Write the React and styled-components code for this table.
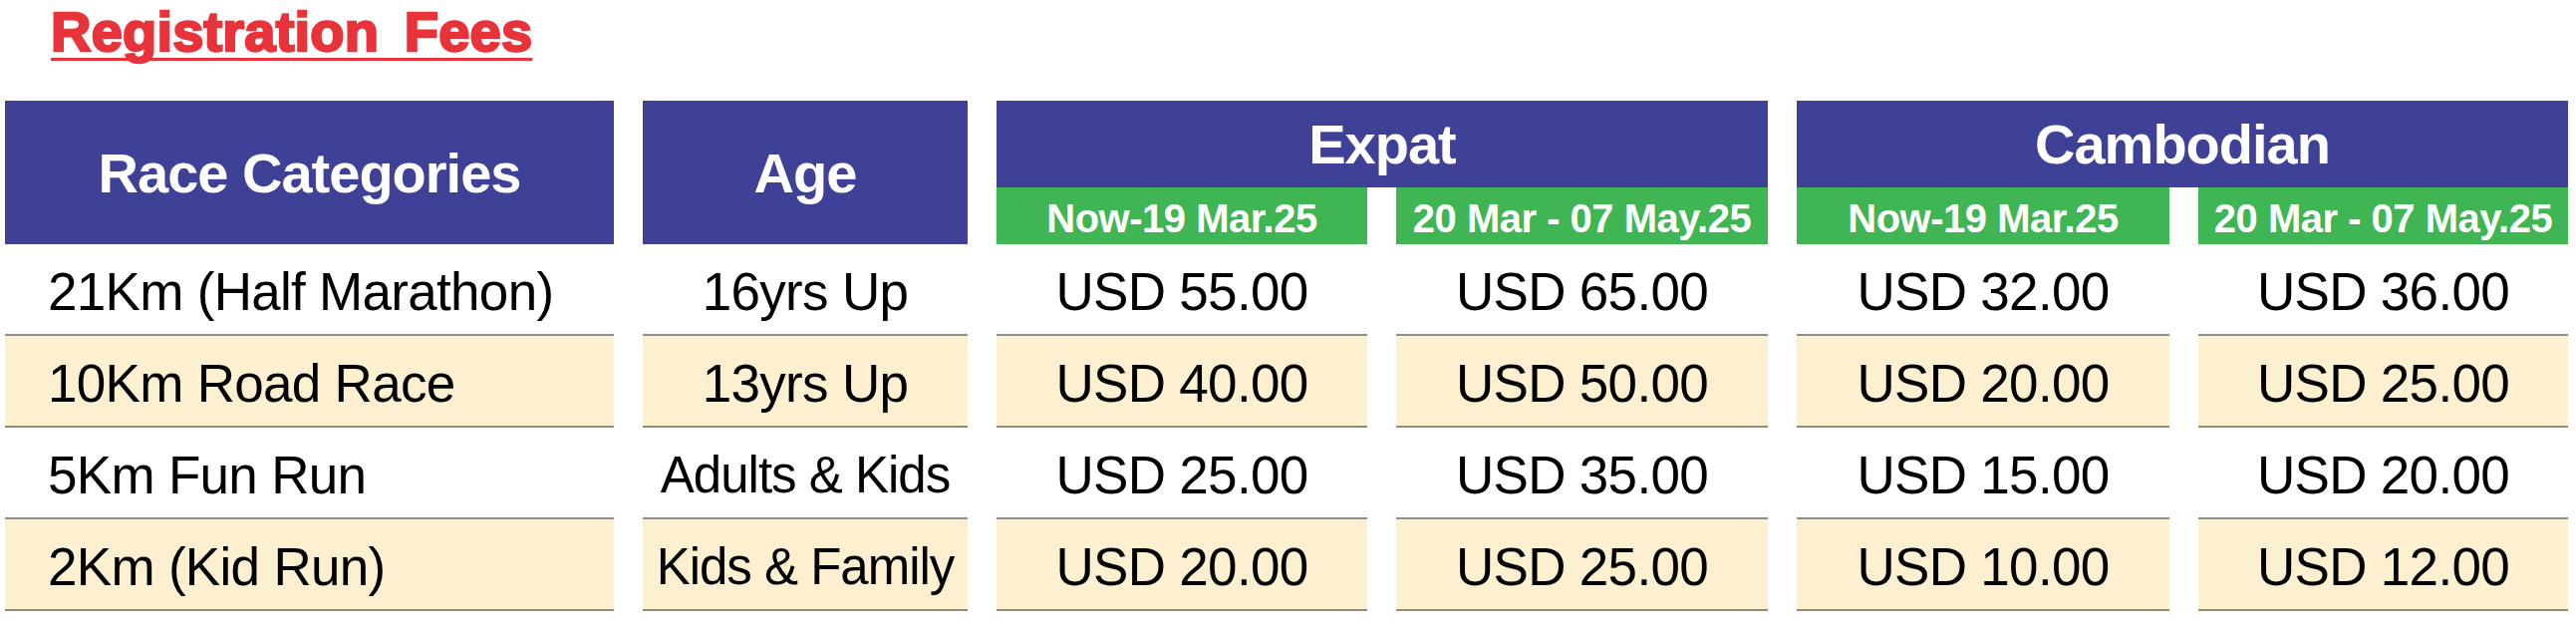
import React from "react";
import styled, { createGlobalStyle } from "styled-components";

const GlobalStyle = createGlobalStyle`
  html, body {
    margin: 0;
    padding: 0;
    background: #ffffff;
    font-family: "Liberation Sans", Arial, sans-serif;
  }
`;

const Page = styled.div`
  padding: 5px 6px 0 5px;
  box-sizing: border-box;
  width: 2585px;
`;

const Title = styled.h1`
  margin: 0 0 0 46px;
  height: 53px;
  font-family: "Liberation Sans", Arial, sans-serif;
  font-weight: 700;
  font-size: 56px;
  line-height: 53px;
  letter-spacing: 0.2px;
  word-spacing: 10px;
  color: #e8333a;
  -webkit-text-stroke: 2.4px #e8333a;
  text-decoration: underline;
  text-decoration-thickness: 3px;
  text-underline-offset: 7px;
  text-decoration-skip-ink: none;
  display: inline-block;
`;

const Table = styled.div`
  display: grid;
  grid-template-columns: 611px 326px 372px 373px 374px 371px;
  grid-template-rows: 87px 57px repeat(4, 92px);
  column-gap: 29px;
  margin-top: 43px;
`;

const HeadCell = styled.div`
  grid-row: ${(p) => (p.$rows ? `span ${p.$rows}` : "auto")};
  grid-column: ${(p) => (p.$cols ? `span ${p.$cols}` : "auto")};
  background: #3f4196;
  color: #ffffff;
  display: flex;
  align-items: center;
  justify-content: center;
  font-weight: 700;
  font-size: 56px;
  letter-spacing: -1px;
  white-space: nowrap;
`;

const SubHead = styled.div`
  background: #3fb553;
  color: #ffffff;
  display: flex;
  align-items: center;
  justify-content: center;
  box-sizing: border-box;
  padding-top: 6px;
  font-weight: 700;
  font-size: 40px;
  letter-spacing: -0.5px;
  white-space: nowrap;
`;

const Cell = styled.div`
  background: ${(p) => (p.$shade ? "#fdf0d1" : "#ffffff")};
  border-bottom: 2px solid #8f8c82;
  box-sizing: border-box;
  display: flex;
  align-items: center;
  justify-content: ${(p) => (p.$left ? "flex-start" : "center")};
  padding: 4px 0 0 ${(p) => (p.$left ? "43px" : "0")};
  color: #000000;
  font-size: ${(p) => (p.$small ? "51px" : "53px")};
  letter-spacing: ${(p) => (p.$small ? "-1px" : "-0.7px")};
  white-space: nowrap;
`;

const rows = [
  { race: "21Km (Half Marathon)", age: "16yrs Up", fees: ["USD 55.00", "USD 65.00", "USD 32.00", "USD 36.00"] },
  { race: "10Km Road Race", age: "13yrs Up", fees: ["USD 40.00", "USD 50.00", "USD 20.00", "USD 25.00"] },
  { race: "5Km Fun Run", age: "Adults & Kids", fees: ["USD 25.00", "USD 35.00", "USD 15.00", "USD 20.00"] },
  { race: "2Km (Kid Run)", age: "Kids & Family", fees: ["USD 20.00", "USD 25.00", "USD 10.00", "USD 12.00"] },
];

const periods = ["Now-19 Mar.25", "20 Mar - 07 May.25"];

export default function App() {
  return (
    <>
      <GlobalStyle />
      <Page>
        <Title>Registration Fees</Title>
        <Table>
          <HeadCell $rows={2}>Race Categories</HeadCell>
          <HeadCell $rows={2}>Age</HeadCell>
          <HeadCell $cols={2}>Expat</HeadCell>
          <HeadCell $cols={2}>Cambodian</HeadCell>
          {[...periods, ...periods].map((p, i) => (
            <SubHead key={i}>{p}</SubHead>
          ))}
          {rows.map((r, i) => (
            <React.Fragment key={r.race}>
              <Cell $shade={i % 2 === 1} $left>
                {r.race}
              </Cell>
              <Cell $shade={i % 2 === 1} $small={r.age.includes("&")}>
                {r.age}
              </Cell>
              {r.fees.map((f, j) => (
                <Cell key={j} $shade={i % 2 === 1}>
                  {f}
                </Cell>
              ))}
            </React.Fragment>
          ))}
        </Table>
      </Page>
    </>
  );
}
